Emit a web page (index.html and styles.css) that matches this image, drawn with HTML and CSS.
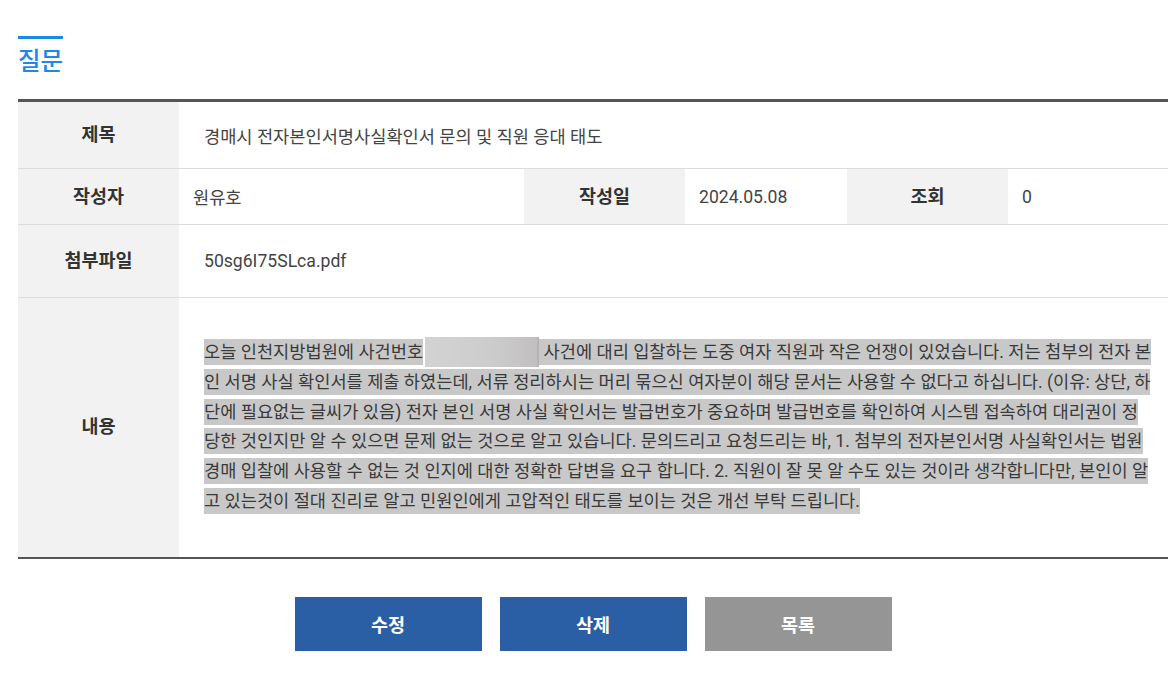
FILE: index.html
```html
<!DOCTYPE html>
<html lang="ko">
<head>
<meta charset="utf-8">
<title>질문</title>
<link rel="stylesheet" href="styles.css">
</head>
<body>
<div class="page">
  <h2 class="title">질문</h2>
  <table class="view">
    <colgroup>
      <col class="c-label"><col class="c-v1"><col class="c-label"><col class="c-v2"><col class="c-label"><col class="c-v3">
    </colgroup>
    <tr class="r-subject">
      <th>제목</th>
      <td colspan="5" class="pad">경매시 전자본인서명사실확인서 문의 및 직원 응대 태도</td>
    </tr>
    <tr class="r-info">
      <th>작성자</th>
      <td class="pad-s">원유호</td>
      <th>작성일</th>
      <td class="pad-s">2024.05.08</td>
      <th>조회</th>
      <td class="pad-s">0</td>
    </tr>
    <tr class="r-file">
      <th>첨부파일</th>
      <td colspan="5" class="pad">50sg6I75SLca.pdf</td>
    </tr>
    <tr class="r-body">
      <th>내용</th>
      <td colspan="5" class="pad body"><p class="content"><span class="sel">오늘 인천지방법원에 사건번호</span><span class="redact"></span><span class="sel"> 사건에 대리 입찰하는 도중 여자 직원과 작은 언쟁이 있었습니다. 저는 첨부의 전자 본<br>인 서명 사실 확인서를 제출 하였는데, 서류 정리하시는 머리 묶으신 여자분이 해당 문서는 사용할 수 없다고 하십니다. (이유: 상단, 하<br>단에 필요없는 글씨가 있음) 전자 본인 서명 사실 확인서는 발급번호가 중요하며 발급번호를 확인하여 시스템 접속하여 대리권이 정<br>당한 것인지만 알 수 있으면 문제 없는 것으로 알고 있습니다. 문의드리고 요청드리는 바, 1. 첨부의 전자본인서명 사실확인서는 법원<br>경매 입찰에 사용할 수 없는 것 인지에 대한 정확한 답변을 요구 합니다. 2. 직원이 잘 못 알 수도 있는 것이라 생각합니다만, 본인이 알<br>고 있는것이 절대 진리로 알고 민원인에게 고압적인 태도를 보이는 것은 개선 부탁 드립니다.</span></p></td>
    </tr>
  </table>
  <div class="buttons">
    <button class="btn blue">수정</button>
    <button class="btn blue">삭제</button>
    <button class="btn gray">목록</button>
  </div>
</div>
</body>
</html>
```
FILE: styles.css
```css
html, body {
  margin: 0;
  padding: 0;
  background: #fff;
}
body {
  font-family: "Noto Sans CJK KR", "Noto Sans", sans-serif;
  color: #444;
}
.page {
  padding: 36px 0 0 18px;
}
.title {
  display: inline-block;
  margin: 0;
  padding-top: 3px;
  border-top: 3px solid #1a8ae6;
  font-size: 24.5px;
  line-height: 36px;
  font-weight: 500;
  color: #1a8ae6;
}
.view {
  margin-top: 21px;
  width: 1150px;
  border-collapse: collapse;
  table-layout: fixed;
  border-top: 3px solid #555;
  border-bottom: 2px solid #555;
}
.c-label { width: 161px; }
.c-v1 { width: 345px; }
.c-v2 { width: 162px; }
.c-v3 { width: 160px; }
.view th {
  background: #f2f2f2;
  font-size: 18.5px;
  font-weight: 700;
  color: #333;
  text-align: center;
  padding: 0 0 4px;
}
.view td {
  font-family: "Roboto", "Noto Sans CJK KR", sans-serif;
  font-size: 17.6px;
  color: #444;
  padding: 0;
}
.view tr + tr th, .view tr + tr td {
  border-top: 1px solid #dcdcdc;
}
.r-subject { height: 68px; }
.r-info { height: 56px; }
.r-file { height: 73px; }
.r-body { height: 260px; }
.pad { padding-left: 25px !important; }
.pad-s { padding-left: 14px !important; }
.body { padding-right: 0 !important; }
.content {
  margin: 0;
  line-height: 29.7px;
  white-space: nowrap;
  color: #3a3a3a;
}
.sel {
  background: #c8c8c8;
  padding: 3px 0;
}
.redact {
  display: inline-block;
  width: 112px;
  height: 30px;
  vertical-align: top;
  margin: -1px 0 0 2px;
  background: linear-gradient(90deg, #d4d3d4, #cdcccd 60%, #c2bfc0);
  border-right: 2px solid #b4b4b4;
}
.buttons {
  width: 1150px;
  display: flex;
  justify-content: center;
  gap: 18px;
  margin-top: 38px;
}
.btn {
  width: 187px;
  height: 54px;
  border: 0;
  font-family: "Noto Sans CJK KR", "Noto Sans", sans-serif;
  font-size: 18.5px;
  font-weight: 700;
  color: #fff;
  cursor: pointer;
}
.blue { background: #2a5fa5; }
.gray { background: #959595; }
```
